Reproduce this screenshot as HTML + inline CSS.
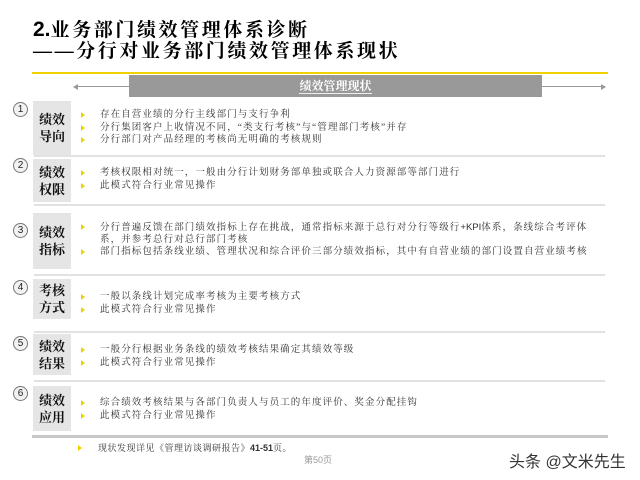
<!DOCTYPE html>
<html><head><meta charset="utf-8"><style>
*{margin:0;padding:0}
body{width:640px;height:480px;background:#fff;position:relative;overflow:hidden;font-family:"Liberation Serif","Noto Serif CJK SC",serif}
.a{position:absolute}
.t{left:33px;font-size:19px;color:#000;font-weight:bold;letter-spacing:2.6px;white-space:nowrap;line-height:20px}
.box{left:33px;width:38px;background:#e5e5e5;font-weight:bold;font-size:13px;color:#111;display:flex;align-items:center;justify-content:center;text-align:center;line-height:17px}
.c{left:13px;width:13px;height:13px;border:1px solid #777;border-radius:50%;background:#f2f2f2;font-family:"Liberation Sans",sans-serif;font-size:10px;line-height:13px;text-align:center;color:#222}
.sep{left:34px;width:571px;height:2px;background:#e2e2e2}
.b{left:100px;font-size:9.5px;color:#333;letter-spacing:1.1px;white-space:nowrap;line-height:13px}
.m{left:81px;width:0;height:0;border-left:4px solid #f5d000;border-top:3px solid transparent;border-bottom:3px solid transparent}
</style></head><body>
<div class="a t" style="top:20px"><span style="font-family:'Liberation Sans',sans-serif;font-size:21px;letter-spacing:0">2.</span>业务部门绩效管理体系诊断</div>
<div class="a t" style="top:42px">——分行对业务部门绩效管理体系现状</div>
<div class="a" style="left:32px;top:72px;width:576px;height:2px;background:#f2d200"></div>
<div class="a" style="left:75px;top:86px;width:530px;height:1px;background:#999"></div>
<div class="a" style="left:73px;top:84px;border-right:5px solid #999;border-top:3px solid transparent;border-bottom:3px solid transparent"></div>
<div class="a" style="left:601px;top:84px;border-left:5px solid #999;border-top:3px solid transparent;border-bottom:3px solid transparent"></div>
<div class="a" style="left:129px;top:75px;width:413px;height:22px;background:#999;color:#fff;font-size:12px;font-weight:bold;text-align:center;line-height:22px"><span style="border-bottom:1px solid #eee">绩效管理现状</span></div>

<div class="a c" style="top:102px">1</div>
<div class="a box" style="top:101px;height:54px">绩效<br>导向</div>
<div class="a m" style="top:112px"></div><div class="a b" style="top:109px">存在自营业绩的分行主线部门与支行争利</div>
<div class="a m" style="top:125px"></div><div class="a b" style="top:122px">分行集团客户上收情况不同，“类支行考核”与“管理部门考核”并存</div>
<div class="a m" style="top:137px"></div><div class="a b" style="top:134px">分行部门对产品经理的考核尚无明确的考核规则</div>
<div class="a sep" style="top:155px"></div>

<div class="a c" style="top:158px">2</div>
<div class="a box" style="top:159px;height:43px">绩效<br>权限</div>
<div class="a m" style="top:170px"></div><div class="a b" style="top:167px">考核权限相对统一，一般由分行计划财务部单独或联合人力资源部等部门进行</div>
<div class="a m" style="top:183px"></div><div class="a b" style="top:180px">此模式符合行业常见操作</div>
<div class="a sep" style="top:204px"></div>

<div class="a c" style="top:223px">3</div>
<div class="a box" style="top:213px;height:56px">绩效<br>指标</div>
<div class="a m" style="top:224px"></div><div class="a b" style="top:221px">分行普遍反馈在部门绩效指标上存在挑战，通常指标来源于总行对分行等级行<span style="font-family:'Liberation Sans',sans-serif;letter-spacing:0">+KPI</span>体系，条线综合考评体</div>
<div class="a b" style="top:234px">系，并参考总行对总行部门考核</div>
<div class="a m" style="top:249px"></div><div class="a b" style="top:246px">部门指标包括条线业绩、管理状况和综合评价三部分绩效指标，其中有自营业绩的部门设置自营业绩考核</div>
<div class="a sep" style="top:274px"></div>

<div class="a c" style="top:280px">4</div>
<div class="a box" style="top:279px;height:40px">考核<br>方式</div>
<div class="a m" style="top:294px"></div><div class="a b" style="top:291px">一般以条线计划完成率考核为主要考核方式</div>
<div class="a m" style="top:307px"></div><div class="a b" style="top:304px">此模式符合行业常见操作</div>
<div class="a sep" style="top:331px"></div>

<div class="a c" style="top:336px">5</div>
<div class="a box" style="top:334px;height:41px">绩效<br>结果</div>
<div class="a m" style="top:347px"></div><div class="a b" style="top:344px">一般分行根据业务条线的绩效考核结果确定其绩效等级</div>
<div class="a m" style="top:360px"></div><div class="a b" style="top:357px">此模式符合行业常见操作</div>
<div class="a sep" style="top:380px"></div>

<div class="a c" style="top:386px">6</div>
<div class="a box" style="top:386px;height:45px">绩效<br>应用</div>
<div class="a m" style="top:400px"></div><div class="a b" style="top:397px">综合绩效考核结果与各部门负责人与员工的年度评价、奖金分配挂钩</div>
<div class="a m" style="top:413px"></div><div class="a b" style="top:410px">此模式符合行业常见操作</div>

<div class="a" style="left:32px;top:435px;width:576px;height:3px;background:#c8c8c8"></div>
<div class="a m" style="top:445px;left:78px"></div>
<div class="a b" style="top:442px;left:98px;font-size:9px;letter-spacing:0.5px">现状发现详见《管理访谈调研报告》<span style="font-family:'Liberation Sans',sans-serif;font-weight:bold;letter-spacing:0">41-51</span>页。</div>
<div class="a" style="left:304px;top:453px;font-size:9px;color:#999;font-family:'Liberation Sans','Noto Sans CJK SC',sans-serif">第50页</div>
<div class="a" style="left:509px;top:448px;font-size:16px;color:#333;font-family:'Liberation Sans','Noto Sans CJK SC',sans-serif;white-space:nowrap;text-shadow:0 0 2px #fff">头条 @文米先生</div>
</body></html>
